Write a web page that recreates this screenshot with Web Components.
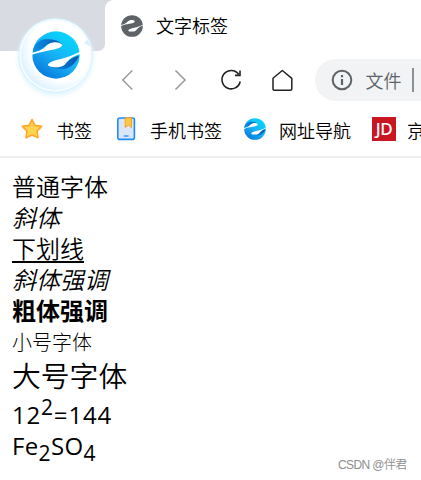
<!DOCTYPE html>
<html lang="zh-CN">
<head>
<meta charset="utf-8">
<title>文字标签</title>
<style>
  body {
    margin: 0;
    overflow: hidden;
    background: #fff;
    color: #000;
    font-family: "Noto Sans", "Noto Sans CJK SC", sans-serif;
  }
</style>
</head>
<body>
<browser-window>
  <tab-strip slot="tabs">文字标签</tab-strip>
  <nav-bar slot="nav">文件</nav-bar>
  <bookmark-bar slot="bookmarks">
    <bookmark-item icon="star" style="width: 94px">书签</bookmark-item>
    <bookmark-item icon="phone" style="width: 129px">手机书签</bookmark-item>
    <bookmark-item icon="logo" style="width: 128px">网址导航</bookmark-item>
    <bookmark-item icon="jd" style="width: 80px">京</bookmark-item>
  </bookmark-bar>
  <text-demo></text-demo>
</browser-window>
<water-mark>CSDN @伴君</water-mark>

<script>
class BrowserLogo extends HTMLElement {
  constructor() {
    super();
    const mono = this.hasAttribute("mono");
    this.attachShadow({ mode: "open" }).innerHTML = /*HTML*/ `
      <style>
        :host { display: block; flex: none; width: 22px; height: 22px; }
        svg { display: block; width: 100%; height: 100%; }
      </style>
      <svg viewBox="94 93 144 144">
        <defs>
          <linearGradient id="g" x1=".8" y1=".1" x2=".2" y2=".95">
            <stop offset="0" stop-color="#08d5fb"/>
            <stop offset=".5" stop-color="#16b2f6"/>
            <stop offset="1" stop-color="#0878dc"/>
          </linearGradient>
          <linearGradient id="d" x1="0" y1="0" x2="1" y2="0">
            <stop offset="0" stop-color="#0a8fe8"/>
            <stop offset="1" stop-color="#0757ad"/>
          </linearGradient>
        </defs>
        <circle cx="166" cy="165" r="71" fill="${mono ? "#5f6368" : "url(#g)"}"/>
        ${mono ? "" : `
        <path fill="url(#d)" d="M97 154C100 136 112 121 132 118C153 116 176 121 184 133C169 126 148 125 134 139C122 148 111 153 97 154Z"/>
        <path fill="url(#d)" d="M235 167C224 195 200 212 170 206C150 204 143 199 143 196C165 204 188 202 197 188C208 175 221 170 235 167Z"/>`}
        <path fill="#fff" d="M92 165C112 158 128 155 148 151C168 148 186 142 184 134C178 123 147 124 137 137C127 148 114 154 92 159Z"/>
        <path fill="#fff" d="M241 155C218 165 203 171 181 177C162 181 141 187 142 196C148 204 180 204 192 194C205 176 221 168 241 161Z"/>
      </svg>
    `;
  }
}

class TabStrip extends HTMLElement {
  constructor() {
    super();
    this.attachShadow({ mode: "open" }).innerHTML = /*HTML*/ `
      <style>
        :host { display: flex; height: 51px; background: #fff; }
        .left { width: 105px; background: #d8dbe1; border-bottom-right-radius: 7px; position: relative; }
        .corner { position: absolute; left: 105px; top: 0; width: 8px; height: 8px;
          background: radial-gradient(circle at 8px 8px, #fff 7.5px, #d8dbe1 8px); }
        .tab { display: flex; align-items: center; gap: 13px; padding-left: 16px; font-size: 18px; font-weight: 350; }
        .tab span { margin-top: -1px; }
        browser-logo { margin-top: 1px; }
        .badge { position: absolute; left: 18px; top: 18px; width: 75px; height: 75px; z-index: 2;
          border-radius: 50%; box-sizing: border-box; border: 1px solid #d3f0ff;
          background: radial-gradient(circle at 60% 40%, #fff 52%, #d5eeff 76%);
          box-shadow: inset 0 0 0 2px #f5fcff, 0 3px 5px #e0f5ff;
          display: grid; place-items: center; }
        .badge browser-logo { width: 48px; height: 48px; margin: -1px 0 0; }
        .glint { position: absolute; left: 64px; top: 21px; width: 7px; height: 7px; }
      </style>
      <div class="left">
        <div class="corner"></div>
        <div class="badge">
          <browser-logo></browser-logo>
          <svg class="glint" viewBox="0 0 7 7"><path d="M1 3L5 0L7 6Z" fill="#d3eeff"/></svg>
        </div>
      </div>
      <div class="tab"><browser-logo mono></browser-logo><span><slot></slot></span></div>
    `;
  }
}

class NavBar extends HTMLElement {
  constructor() {
    super();
    this.attachShadow({ mode: "open" }).innerHTML = /*HTML*/ `
      <style>
        :host { display: flex; align-items: center; height: 58px; padding-left: 116px; }
        svg { display: block; flex: none; fill: none; stroke-width: 1.5; }
        .buttons { display: flex; gap: 27.5px; }
        .address { display: flex; align-items: center; flex: 1; height: 42px; margin-left: 20px;
          padding-left: 15px; border-radius: 21px 0 0 21px; background: #f1f3f4; color: #5f6368;
          font-size: 18px; font-weight: 350; }
        .address span { margin-left: 12px; }
        .address i { width: 2px; height: 24px; margin-left: 10px; background: #8c9094; }
      </style>
      <div class="buttons">
        <svg width="24" height="24" stroke="#999"><path d="M16.3 2.5L6.8 12L16.3 21.5"/></svg>
        <svg width="24" height="24" stroke="#999"><path d="M7.5 2.5L17 12L7.5 21.5"/></svg>
        <svg width="24" height="24" stroke="#222" style="stroke-width: 1.6"><path d="M19.6 6.2A9.2 9.2 0 1 0 21.2 13.5M21 2.5V7.4H16"/></svg>
        <svg width="24" height="24" stroke="#222" stroke-linejoin="round"><path d="M2 10.3L11.3 2.5L20.8 10.3V21Q20.8 22.2 19.6 22.2H3.2Q2 22.2 2 21Z"/></svg>
      </div>
      <div class="address">
        <svg width="24" height="24" stroke="#5f6368"><circle cx="12" cy="12" r="9.3" stroke-width="2"/><path d="M12 11V17M12 7V9.2" stroke-width="2.2"/></svg>
        <span><slot></slot></span><i></i>
      </div>
    `;
  }
}

class BookmarkBar extends HTMLElement {
  constructor() {
    super();
    this.attachShadow({ mode: "open" }).innerHTML = /*HTML*/ `
      <style>
        :host { display: flex; height: 47px; padding-left: 21px; border-bottom: 2px solid #eee; overflow: hidden; }
      </style>
      <slot></slot>
    `;
  }
}

const bookmarkIcons = {
  star: `<svg width="22" height="22" viewBox="0 0 22 22"><path d="M11 1.5L14 7.4L20.7 8.4L16 13.2L17 19.8L11 17L5 19.8L6 13.2L1.3 8.4L8 7.4Z" fill="#ffd34e" stroke="#ffa62b" stroke-width="1.6" stroke-linejoin="round"/></svg>`,
  phone: `<svg width="22" height="24" viewBox="0 0 22 24"><rect x="2.8" y="1" width="16.6" height="21.4" rx="2" fill="#dbe6fa" stroke="#1f8bf8" stroke-width="1.6"/><path d="M10.2 .8H16.5V10.5L13.3 8L10.2 10.5Z" fill="#ffc843" stroke="#f5a020"/><path d="M8.8 19H13.6" stroke="#1f8bf8" stroke-width="1.3"/></svg>`,
  logo: `<browser-logo></browser-logo>`,
  jd: `<div class="jd">JD</div>`,
};

class BookmarkItem extends HTMLElement {
  constructor() {
    super();
    this.attachShadow({ mode: "open" }).innerHTML = /*HTML*/ `
      <style>
        :host { display: flex; flex: none; align-items: center; height: 40px; font-size: 18px; font-weight: 350; white-space: nowrap; }
        svg { display: block; }
        .icon { width: 24px; flex: none; }
        .text { margin-left: 11px; margin-top: 1px; }
        .jd { width: 24px; height: 24px; background: #c91623; color: #fff; text-align: center;
          font: 500 17px/24px "Noto Sans", sans-serif; letter-spacing: -.5px; }
      </style>
      <div class="icon">${bookmarkIcons[this.getAttribute("icon")]}</div>
      <span class="text"><slot></slot></span>
    `;
  }
}

class TextDemo extends HTMLElement {
  constructor() {
    super();
    this.attachShadow({ mode: "open" }).innerHTML = /*HTML*/ `
      <style>
        :host { display: block; padding: 13px 0 0 12px; font-size: 24px; line-height: 31px; font-weight: 350; }
        div { height: 31px; white-space: nowrap; }
        u { text-decoration-thickness: 2px; text-underline-offset: 3px; }
        .small { font-size: 20px; line-height: 33px; font-weight: 300; }
        .big { font-size: 28.8px; height: 38px; line-height: 38px; }
        .latin { line-height: 40px; height: 31px; font-weight: 400; font-family: "Open Sans", sans-serif; letter-spacing: .35px; }
        .power { letter-spacing: .8px; }
        sub, sup { font-size: 21px; line-height: 0; }
      </style>
      <div>普通字体</div>
      <div><i>斜体</i></div>
      <div><u>下划线</u></div>
      <div><em>斜体强调</em></div>
      <div><b>粗体强调</b></div>
      <div class="small">小号字体</div>
      <div class="big">大号字体</div>
      <div class="latin power">12<sup>2</sup>=144</div>
      <div class="latin">Fe<sub>2</sub>SO<sub>4</sub></div>
    `;
  }
}

class BrowserWindow extends HTMLElement {
  constructor() {
    super();
    this.attachShadow({ mode: "open" }).innerHTML = /*HTML*/ `
      <style>
        :host { display: flex; flex-direction: column; width: 421px; height: 480px; }
      </style>
      <slot name="tabs"></slot>
      <slot name="nav"></slot>
      <slot name="bookmarks"></slot>
      <slot></slot>
    `;
  }
}

class WaterMark extends HTMLElement {
  constructor() {
    super();
    this.attachShadow({ mode: "open" }).innerHTML = /*HTML*/ `
      <style>
        :host { position: absolute; left: 338px; top: 456px; font: 350 12px/18px "Liberation Sans", "Noto Sans CJK SC", sans-serif;
          color: #8e8e8e; white-space: nowrap; letter-spacing: -.6px; }
      </style>
      <slot></slot>
    `;
  }
}

customElements.define("browser-logo", BrowserLogo);
customElements.define("tab-strip", TabStrip);
customElements.define("nav-bar", NavBar);
customElements.define("bookmark-bar", BookmarkBar);
customElements.define("bookmark-item", BookmarkItem);
customElements.define("text-demo", TextDemo);
customElements.define("browser-window", BrowserWindow);
customElements.define("water-mark", WaterMark);
</script>
</body>
</html>
